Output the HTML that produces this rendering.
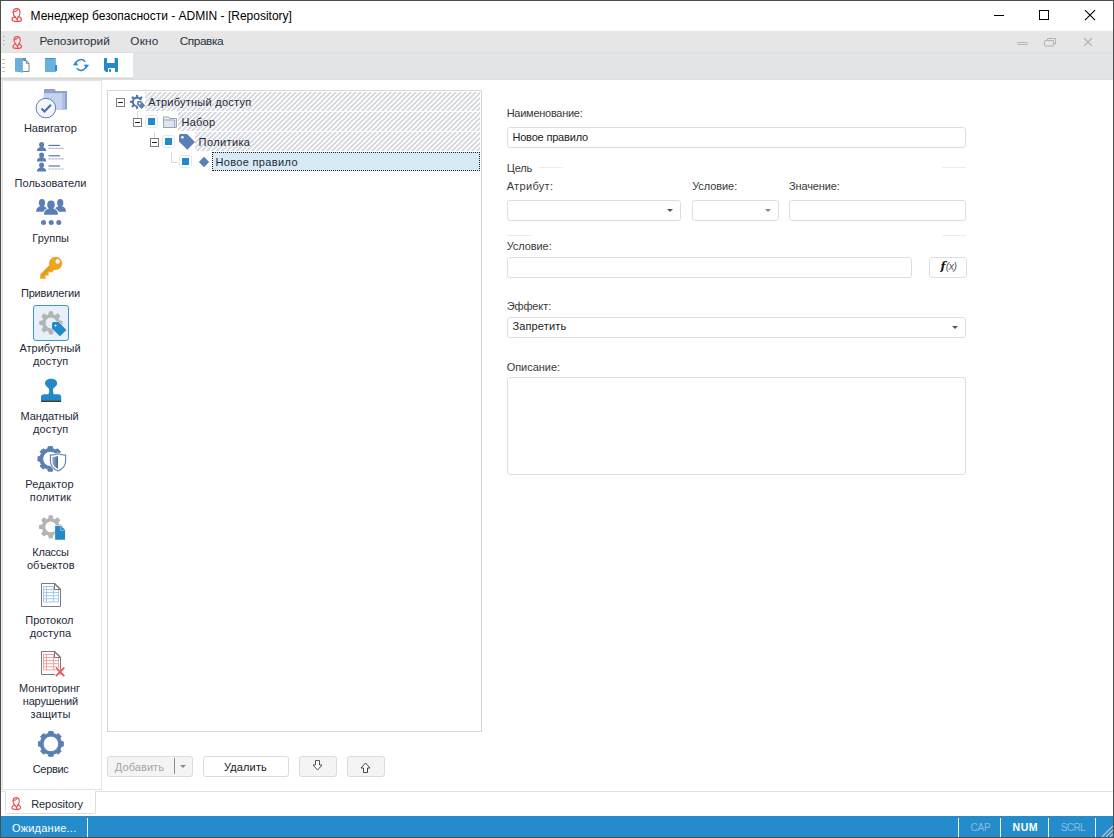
<!DOCTYPE html>
<html lang="ru">
<head>
<meta charset="utf-8">
<title>Менеджер безопасности - ADMIN - [Repository]</title>
<style>
*{box-sizing:border-box;margin:0;padding:0}
html,body{width:1114px;height:838px;overflow:hidden;background:#fff}
body{font-family:"Liberation Sans",sans-serif;font-size:12px;color:#222;position:relative}
.abs{position:absolute}
.t{position:absolute;white-space:pre;line-height:1}
svg{position:absolute;overflow:visible}
#win{position:absolute;left:0;top:0;width:1114px;height:838px;border:1px solid #4f4f4f;overflow:hidden;background:#fff}
#in{position:absolute;left:-1px;top:-1px;width:1114px;height:838px}
#titlebar{left:1px;top:1px;width:1112px;height:30px;background:#fff}
#menubar{left:1px;top:31px;width:1112px;height:22px;background:#e6e6e6;border-bottom:1px solid #e0e0e0}
#toolbar{left:1px;top:53px;width:1112px;height:26px;background:#e1e5e8}
#toolwhite{left:1px;top:53px;width:132px;height:24px;background:#fff}
#tb1{left:1px;top:77px;width:132px;height:1px;background:#ececec}
#tb2{left:1px;top:78px;width:132px;height:1px;background:#d2d4d5}
#tb3{left:1px;top:79px;width:1112px;height:1px;background:#e0e1dc}
#sidebar{left:2px;top:80px;width:100px;height:710px;border:1px solid #e1e5ea;background:#fff}
.sl{color:#1e2a3a}
#selbox{left:33px;top:305px;width:36px;height:36px;border:1px solid #3a96d2;border-radius:3px;background:#e8f1fa}
#tree{left:107px;top:90px;width:375px;height:642px;border:1px solid #d3d7dc;background:#fff}
.hatch{position:absolute;height:19px;background-color:#fff;background-image:repeating-linear-gradient(135deg,#d9dce1 0,#d9dce1 1.5px,#fff 1.5px,#fff 3.5355px)}
.tt{color:#1e2a3a}
.exp{position:absolute;width:9px;height:9px;border:1px solid #7c7c7c;background:#fff}
.exp:after{content:"";position:absolute;left:1px;top:3px;width:5px;height:1px;background:#222}
.chk{position:absolute;width:13px;height:13px;border:1px solid #e6e8eb;border-radius:3px;background:#fff}
.chk:after{content:"";position:absolute;left:2px;top:2px;width:7px;height:7px;background:#2389c9}
.ln{position:absolute;background:#dadada}
#sel{left:212px;top:152px;width:268px;height:19px;background:#d9eaf7;border:1px dotted #222}
.lbl{color:#3a3a3a}
.inp{position:absolute;height:21px;border:1px solid #dedede;border-radius:3px;background:#fff}
.arr{position:absolute;width:0;height:0;border-left:3px solid transparent;border-right:3px solid transparent;border-top:3px solid #555}
.sepl{position:absolute;height:1px;background:#ececec}
.btn{position:absolute;height:21px;border:1px solid #dcdcdc;border-radius:3px;background:#fff}
.btn.g{background:#f4f4f4}
#tabstrip{left:1px;top:791px;width:1112px;height:25px;background:#fff;border-top:1px solid #e2e2dc}
#tab{left:5px;top:791px;width:91px;height:23px;background:#fff;border:1px solid #dedede;border-top:none;border-radius:0 0 2px 2px}
#status{left:1px;top:816px;width:1112px;height:21px;background:#258ccc}
.ssep{position:absolute;top:818px;width:1px;height:19px;background:#f0f5fa}
</style>
</head>
<body>
<div id="win"><div id="in">

<!-- TITLE -->
<div id="titlebar" class="abs"></div>
<svg style="left:11px;top:8px" width="12" height="14" viewBox="0 0 12 14"><g fill="none" stroke="#f04a50" stroke-width="1.15" stroke-linecap="round" stroke-linejoin="round">
<path d="M2.200 4.600C2.200 1.800 3.800 .600 5.600 .600S9 1.800 9 4.600C9 6.400 8.300 7.800 7.400 8.600"/>
<path d="M2.200 4.600C2.300 6.600 3 8 4.200 8.900"/>
<path d="M2.600 3.600C4 3.600 5.600 3 6.600 1.800"/>
<path d="M4.200 8.900C2.400 9.200 1 10 1 11.600C1 13 2.600 13.400 4.600 13.400S7 13.400 7.600 13.400C9.600 13.400 10.400 12.400 10.400 11.400C10.400 10 9.200 9 7.400 8.600"/>
<path d="M4.200 8.900L6 11.400L7.400 8.600M6 11.400L6.600 13.300"/>
</g></svg>
<div class="t" style="left:30.5px;top:10.24px;font-size:12px;color:#000;">Менеджер безопасности - ADMIN - [Repository]</div>
<svg style="left:980px;top:1px" width="133" height="30" viewBox="0 0 133 30">
<path d="M14 14.500h10" stroke="#000" stroke-width="1" fill="none"/>
<rect x="59.500" y="9.500" width="9" height="9" stroke="#000" stroke-width="1" fill="none"/>
<path d="M105 9.200l10 10M115 9.200l-10 10" stroke="#000" stroke-width="1.100" fill="none"/>
</svg>

<!-- MENU -->
<div id="menubar" class="abs"></div>
<div class="abs" style="left:3px;top:36px;width:2px;height:1px;background:#bdbdbd"></div>
<div class="abs" style="left:3px;top:40px;width:2px;height:1px;background:#bdbdbd"></div>
<div class="abs" style="left:3px;top:44px;width:2px;height:1px;background:#bdbdbd"></div>
<svg style="left:12px;top:35.500px" width="11" height="13" viewBox="0 0 12 14"><g fill="none" stroke="#f04a50" stroke-width="1.15" stroke-linecap="round" stroke-linejoin="round">
<path d="M2.200 4.600C2.200 1.800 3.800 .600 5.600 .600S9 1.800 9 4.600C9 6.400 8.300 7.800 7.400 8.600"/>
<path d="M2.200 4.600C2.300 6.600 3 8 4.200 8.900"/>
<path d="M2.600 3.600C4 3.600 5.600 3 6.600 1.800"/>
<path d="M4.200 8.900C2.400 9.200 1 10 1 11.600C1 13 2.600 13.400 4.600 13.400S7 13.400 7.600 13.400C9.600 13.400 10.400 12.400 10.400 11.400C10.400 10 9.200 9 7.400 8.600"/>
<path d="M4.200 8.900L6 11.400L7.400 8.600M6 11.400L6.600 13.300"/>
</g></svg>
<div class="t" style="left:39.5px;top:36.21px;font-size:11.8px;color:#28323f;">Репозиторий</div>
<div class="t" style="left:130.3px;top:36.21px;font-size:11.8px;letter-spacing:0.2px;color:#28323f;">Окно</div>
<div class="t" style="left:179.7px;top:36.21px;font-size:11.8px;letter-spacing:-0.4px;color:#28323f;">Справка</div>
<svg style="left:1010px;top:31px" width="100" height="22" viewBox="0 0 100 22">
<g fill="none" stroke="#b4b4b4" stroke-width="1">
<rect x="7.500" y="11.500" width="10" height="2" rx="1"/>
<path d="M37.500 9v-1.500h8v5.500h-1.500"/><rect x="34.500" y="9.500" width="9" height="5.500" rx=".5"/>
<path d="M74 7l8 8M82 7l-8 8" stroke-width="1.100"/>
</g></svg>

<!-- TOOLBAR -->
<div id="toolbar" class="abs"></div><div id="toolwhite" class="abs"></div>
<div id="tb1" class="abs"></div><div id="tb2" class="abs"></div><div id="tb3" class="abs"></div>
<div class="abs" style="left:2.300px;top:59px;width:3.200px;height:1px;background:#bcbcbc"></div>
<div class="abs" style="left:2.300px;top:63px;width:3.200px;height:1px;background:#bcbcbc"></div>
<div class="abs" style="left:2.300px;top:67px;width:3.200px;height:1px;background:#bcbcbc"></div>
<div class="abs" style="left:2.300px;top:71px;width:3.200px;height:1px;background:#bcbcbc"></div>
<svg style="left:0;top:0" width="140" height="80" viewBox="0 0 140 80">
<!-- open folder with document -->
<path d="M15 58h10.800v3h-3.200v11.600L15 71.200Z" fill="#6ab0dc"/>
<path d="M15 58h10.800v2.600h-1V59H15Z" fill="#2a8ccb"/>
<path d="M23.200 60.500h3l2.800 2.800v8.200h-6" fill="#fff" stroke="#808080" stroke-width="1"/>
<path d="M26.200 60.500v2.800h2.800" fill="none" stroke="#808080" stroke-width="1"/>
<path d="M15 58h7.600v14.600L15 71.200Z" fill="#6ab0dc"/>
<!-- closed folder -->
<path d="M45 58h10.600v7h1.400v6h-1.400v1H45Z" fill="#2a8ccb"/>
<path d="M45 58.800h10v13.200H45Z" fill="#6ab0dc"/>
<!-- refresh -->
<g fill="none" stroke="#2a8ccb" stroke-width="1.500">
<path d="M75.600 65.400a5.400 5.400 0 0 1 9.600-3.700"/>
<path d="M86.400 64.600a5.400 5.400 0 0 1 -9.600 3.700"/>
</g>
<path d="M72.800 65.200h5.600l-2.800-3.600Z" fill="#2a8ccb"/>
<path d="M83.600 64.800h5.600l-2.800 3.600Z" fill="#2a8ccb"/>
<!-- save -->
<path d="M105 58h12a1 1 0 0 1 1 1v12a1 1 0 0 1 -1 1h-11l-2-2V59a1 1 0 0 1 1-1Z" fill="#2389c9"/>
<rect x="107" y="58" width="7.600" height="5" fill="#fff"/>
<rect x="108" y="68" width="7" height="4" fill="#fff"/>
<rect x="109.200" y="69" width="1.800" height="3" fill="#2389c9"/>
</svg>

<!-- SIDEBAR -->
<div class="abs" style="left:1px;top:80px;width:1px;height:711px;background:#ecece8"></div><div id="sidebar" class="abs"></div>
<div id="selbox" class="abs"></div>
<div class="t" style="left:50.35px;top:123.09px;font-size:11px;transform:translateX(-50%);color:#1e2a3a;">Навигатор</div>
<div class="t" style="left:50.5px;top:178.39px;font-size:11px;transform:translateX(-50%);color:#1e2a3a;">Пользователи</div>
<div class="t" style="left:50.7px;top:232.59px;font-size:11px;transform:translateX(-50%);color:#1e2a3a;">Группы</div>
<div class="t" style="left:50.445px;top:288.29px;font-size:11px;transform:translateX(-50%);letter-spacing:-0.21px;color:#1e2a3a;">Привилегии</div>
<div class="t" style="left:50px;top:343.39px;font-size:11px;transform:translateX(-50%);color:#1e2a3a;">Атрибутный</div>
<div class="t" style="left:50.695px;top:356.29px;font-size:11px;transform:translateX(-50%);letter-spacing:0.09px;color:#1e2a3a;">доступ</div>
<div class="t" style="left:49.6px;top:411.29px;font-size:11px;transform:translateX(-50%);letter-spacing:-0.1px;color:#1e2a3a;">Мандатный</div>
<div class="t" style="left:50.695px;top:424.09px;font-size:11px;transform:translateX(-50%);letter-spacing:0.09px;color:#1e2a3a;">доступ</div>
<div class="t" style="left:49.475px;top:479.29px;font-size:11px;transform:translateX(-50%);letter-spacing:0.15px;color:#1e2a3a;">Редактор</div>
<div class="t" style="left:50.525px;top:492.29px;font-size:11px;transform:translateX(-50%);letter-spacing:0.15px;color:#1e2a3a;">политик</div>
<div class="t" style="left:50.535px;top:547.29px;font-size:11px;transform:translateX(-50%);letter-spacing:-0.23px;color:#1e2a3a;">Классы</div>
<div class="t" style="left:50.755px;top:560.09px;font-size:11px;transform:translateX(-50%);letter-spacing:0.11px;color:#1e2a3a;">объектов</div>
<div class="t" style="left:49.4px;top:615.29px;font-size:11px;transform:translateX(-50%);color:#1e2a3a;">Протокол</div>
<div class="t" style="left:50.495px;top:628.09px;font-size:11px;transform:translateX(-50%);letter-spacing:0.09px;color:#1e2a3a;">доступа</div>
<div class="t" style="left:49.6px;top:682.89px;font-size:11px;transform:translateX(-50%);color:#1e2a3a;">Мониторинг</div>
<div class="t" style="left:50.4px;top:695.89px;font-size:11px;transform:translateX(-50%);letter-spacing:-0.2px;color:#1e2a3a;">нарушений</div>
<div class="t" style="left:50.55px;top:708.99px;font-size:11px;transform:translateX(-50%);letter-spacing:0.1px;color:#1e2a3a;">защиты</div>
<div class="t" style="left:50.595px;top:764.09px;font-size:11px;transform:translateX(-50%);letter-spacing:-0.31px;color:#1e2a3a;">Сервис</div>
<svg style="left:0;top:0" width="110" height="800" viewBox="0 0 110 800">
<path d="M44 89h10.500l1.500 2h11v18.600H44Z" fill="#8fa3cf"/><path d="M43.500 93.200h21.500v16.400H43.500Z" fill="#c5d3ee"/><path d="M62 93.200h3v16.400h-3Z" fill="#aebfe3"/><circle cx="45.900" cy="108.100" r="9.800" fill="#f3f6fb" stroke="#5b80b3" stroke-width="1"/><path d="M41.600 108.600l2.800 2.900l6.600-6.800" fill="none" stroke="#4a6fa5" stroke-width="2.100"/>
<ellipse cx="41.60" cy="144.70" rx="2.48" ry="2.70" fill="#5b7fb5"/><path d="M37.00 151.00c0-2.88 1.66-3.24 3.31-4.05v-1.08h2.58v1.08c1.66 0.81 3.31 1.17 3.31 4.05Z" fill="#5b7fb5"/><path d="M48.500 145.4h11.500" stroke="#4a6fa5" stroke-width="1.100"/><path d="M48.500 148.4h15.500" stroke="#b4b9c4" stroke-width="1.200" stroke-dasharray="2.500 .500"/><ellipse cx="41.60" cy="155.10" rx="2.48" ry="2.70" fill="#5b7fb5"/><path d="M37.00 161.40c0-2.88 1.66-3.24 3.31-4.05v-1.08h2.58v1.08c1.66 0.81 3.31 1.17 3.31 4.05Z" fill="#5b7fb5"/><path d="M48.500 155.8h11.500" stroke="#4a6fa5" stroke-width="1.100"/><path d="M48.500 158.8h15.500" stroke="#b4b9c4" stroke-width="1.200" stroke-dasharray="2.500 .500"/><ellipse cx="41.60" cy="165.30" rx="2.48" ry="2.70" fill="#5b7fb5"/><path d="M37.00 171.60c0-2.88 1.66-3.24 3.31-4.05v-1.08h2.58v1.08c1.66 0.81 3.31 1.17 3.31 4.05Z" fill="#5b7fb5"/><path d="M48.500 166.0h11.500" stroke="#4a6fa5" stroke-width="1.100"/><path d="M48.500 169.0h15.500" stroke="#b4b9c4" stroke-width="1.200" stroke-dasharray="2.500 .500"/>
<ellipse cx="41.95" cy="202.84" rx="3.11" ry="3.84" fill="#5b7fb5"/><path d="M36.20 211.80c0-4.10 2.07-4.61 4.14-5.76v-1.54h3.22v1.54c2.07 1.15 4.14 1.66 4.14 5.76Z" fill="#5b7fb5"/><ellipse cx="60.25" cy="202.84" rx="3.11" ry="3.84" fill="#5b7fb5"/><path d="M54.50 211.80c0-4.10 2.07-4.61 4.14-5.76v-1.54h3.22v1.54c2.07 1.15 4.14 1.66 4.14 5.76Z" fill="#5b7fb5"/><ellipse cx="51.00" cy="204.65" rx="4.10" ry="4.35" fill="#fff" stroke="#fff" stroke-width="1.400"/><path d="M43.40 214.80c0-4.64 2.74-5.22 5.47-6.53v-1.74h4.26v1.74c2.74 1.30 5.47 1.89 5.47 6.53Z" fill="#fff" stroke="#fff" stroke-width="1.400"/><ellipse cx="51.00" cy="204.79" rx="3.78" ry="4.29" fill="#5b7fb5"/><path d="M44.00 214.80c0-4.58 2.52-5.15 5.04-6.44v-1.72h3.92v1.72c2.52 1.29 5.04 1.86 5.04 6.44Z" fill="#5b7fb5"/><circle cx="43.5" cy="222.500" r="2.500" fill="#5b7fb5"/><circle cx="51.2" cy="222.500" r="2.500" fill="#5b7fb5"/><circle cx="58.8" cy="222.500" r="2.500" fill="#5b7fb5"/>
<g fill="#f0a321"><circle cx="55.600" cy="263.400" r="6.600"/><path d="M50 264.200L40.200 274.400v4.400h5.400v-3.300h3v-3.200h3.300l4-4Z"/></g><circle cx="57.700" cy="261.500" r="2.200" fill="#fff"/><path d="M42.300 275.200l7.800-7.800" stroke="#9a7a3a" stroke-width=".6"/>
<path d="M59.17 320.21 L62.55 321.05 L62.55 324.75 L59.17 325.59 L58.65 326.85 L60.45 329.84 L57.84 332.45 L54.85 330.65 L53.59 331.17 L52.75 334.55 L49.05 334.55 L48.21 331.17 L46.95 330.65 L43.96 332.45 L41.35 329.84 L43.15 326.85 L42.63 325.59 L39.25 324.75 L39.25 321.05 L42.63 320.21 L43.15 318.95 L41.35 315.96 L43.96 313.35 L46.95 315.15 L48.21 314.63 L49.05 311.25 L52.75 311.25 L53.59 314.63 L54.85 315.15 L57.84 313.35 L60.45 315.96 L58.65 318.95ZM45.50 322.90a5.40 5.40 0 1 0 10.80 0a5.40 5.40 0 1 0 -10.80 0Z" fill="#b4b4b4" fill-rule="evenodd"/><path d="M51.300 323.400Q51.300 321.400 53.300 321.400H58.900L67.400 330L59.900 337.300L51.300 328.700Z" fill="#e8f1fa"/><path d="M52 323.600Q52 322.100 53.500 322.100H58.600L66.400 330L59.900 336.300L52 328.400Z" fill="#2389c9"/><path d="M55.500 324.400l1.200 1.200l-1.200 1.200l-1.200-1.200Z" fill="#fff"/>
<path d="M51.100 378.700c3.600 0 6.100 2.100 6.100 4.700c0 2.400-2.800 3.400-3.800 5.200c-.6 1.400-.5 3.400 .3 5.600h4.400c1.800 0 3.100 1 3.100 2.600v4h-20.200v-4c0-1.600 1.300-2.600 3.100-2.600h4.400c.8-2.200 .9-4.200 .3-5.600c-1-1.800-3.800-2.800-3.800-5.200c0-2.600 2.500-4.700 6.100-4.700Z" fill="#2389c9"/><rect x="41.100" y="400.400" width="20" height="1.600" fill="#3c3c3c"/>
<path d="M60.51 456.45 L62.62 456.79 L62.62 461.01 L60.51 461.35 L59.25 464.39 L60.50 466.12 L57.52 469.10 L55.79 467.85 L52.75 469.11 L52.41 471.22 L48.19 471.22 L47.85 469.11 L44.81 467.85 L43.08 469.10 L40.10 466.12 L41.35 464.39 L40.09 461.35 L37.98 461.01 L37.98 456.79 L40.09 456.45 L41.35 453.41 L40.10 451.68 L43.08 448.70 L44.81 449.95 L47.85 448.69 L48.19 446.58 L52.41 446.58 L52.75 448.69 L55.79 449.95 L57.52 448.70 L60.50 451.68 L59.25 453.41ZM42.70 458.90a7.60 7.60 0 1 0 15.20 0a7.60 7.60 0 1 0 -15.20 0Z" fill="#5b7fb5" fill-rule="evenodd" stroke="#5b7fb5" stroke-width="1" stroke-linejoin="round"/><defs><linearGradient id="shg" x1="0" x2="1"><stop offset="0" stop-color="#9db1d3"/><stop offset="1" stop-color="#46659b"/></linearGradient></defs><path d="M49.300 454C52.500 454 55.300 453.600 58 452.400C60.700 453.600 63.500 454 66.700 454V461C66.700 466.400 62.800 470.200 58 472C53.200 470.200 49.300 466.400 49.300 461Z" fill="#fff"/><path d="M50.400 455.100C53.200 455.100 55.600 454.700 58 453.700C60.400 454.700 62.800 455.100 65.600 455.100V461C65.600 465.800 62.200 469.200 58 470.900C53.800 469.200 50.400 465.800 50.400 461Z" fill="#fff" stroke="#5b7fb5" stroke-width="1.100"/><path d="M52.300 457C54.400 457 56.200 456.700 58 456V468.800C54.800 467.400 52.300 464.800 52.300 461Z" fill="url(#shg)"/>
<path d="M58.97 524.21 L62.35 525.05 L62.35 528.75 L58.97 529.59 L58.45 530.85 L60.25 533.84 L57.64 536.45 L54.65 534.65 L53.39 535.17 L52.55 538.55 L48.85 538.55 L48.01 535.17 L46.75 534.65 L43.76 536.45 L41.15 533.84 L42.95 530.85 L42.43 529.59 L39.05 528.75 L39.05 525.05 L42.43 524.21 L42.95 522.95 L41.15 519.96 L43.76 517.35 L46.75 519.15 L48.01 518.63 L48.85 515.25 L52.55 515.25 L53.39 518.63 L54.65 519.15 L57.64 517.35 L60.25 519.96 L58.45 522.95ZM45.30 526.90a5.40 5.40 0 1 0 10.80 0a5.40 5.40 0 1 0 -10.80 0Z" fill="#b4b4b4" fill-rule="evenodd"/><path d="M54.600 525.400h7l4 4v10.900h-11Z" fill="#fff"/><path d="M55.100 525.900h6l4 4v9.900h-10Z" fill="#2389c9"/><path d="M60.600 526.400v4h4" fill="none" stroke="#9fc3de" stroke-width=".8"/>
<path d="M41.5 583.5h13l6 6v17h-19Z" fill="#fff"/><g fill="none" stroke="#9ecbeb" stroke-width="1"><rect x="43.5" y="586.5" width="15" height="15.4"/><path d="M43.5 589.6h15"/><path d="M43.5 592.6h15"/><path d="M43.5 595.7h15"/><path d="M43.5 598.8h15"/><path d="M46.5 586.5v15.4M53.5 586.5v15.4"/></g><path d="M54.5 583.5v6h6Z" fill="#fff"/><path d="M41.5 583.5h13l6 6v17h-19ZM54.5 583.5v6h6" fill="none" stroke="#7a7a7a" stroke-width="1" stroke-linejoin="miter"/><path d="M54.2 583.2l6.6 6.6" fill="none" stroke="#7a7a7a" stroke-width="1.500"/>
<path d="M41.5 651.5h13l6 6v17h-19Z" fill="#fff"/><g fill="none" stroke="#f2a0a0" stroke-width="1"><rect x="43.5" y="654.5" width="15" height="15.4"/><path d="M43.5 657.6h15"/><path d="M43.5 660.6h15"/><path d="M43.5 663.7h15"/><path d="M43.5 666.8h15"/><path d="M46.5 654.5v15.4M53.5 654.5v15.4"/></g><path d="M54.5 651.5v6h6Z" fill="#fff"/><path d="M41.5 651.5h13l6 6v17h-19ZM54.5 651.5v6h6" fill="none" stroke="#7a7a7a" stroke-width="1" stroke-linejoin="miter"/><path d="M54.2 651.2l6.6 6.6" fill="none" stroke="#7a7a7a" stroke-width="1.500"/><path d="M55.600 667.400l4.500 4.500l-4.500 4.500" stroke="#fff" stroke-width="3.200" fill="none"/><path d="M55.900 667.700l8.400 8.400M64.300 667.700l-8.400 8.400" stroke="#ee5054" stroke-width="1.700"/>
<path d="M61.30 741.40 L63.32 741.77 L63.32 746.03 L61.30 746.40 L60.02 749.49 L61.19 751.18 L58.18 754.19 L56.49 753.02 L53.40 754.30 L53.03 756.32 L48.77 756.32 L48.40 754.30 L45.31 753.02 L43.62 754.19 L40.61 751.18 L41.78 749.49 L40.50 746.40 L38.48 746.03 L38.48 741.77 L40.50 741.40 L41.78 738.31 L40.61 736.62 L43.62 733.61 L45.31 734.78 L48.40 733.50 L48.77 731.48 L53.03 731.48 L53.40 733.50 L56.49 734.78 L58.18 733.61 L61.19 736.62 L60.02 738.31ZM43.10 743.90a7.80 7.80 0 1 0 15.60 0a7.80 7.80 0 1 0 -15.60 0Z" fill="#5b7fb5" fill-rule="evenodd" stroke="#5b7fb5" stroke-width="1" stroke-linejoin="round"/>
</svg>

<!-- TREE -->
<div id="tree" class="abs"></div>
<div class="abs" style="left:145px;top:92px;width:335px;height:19px;overflow:hidden"><div class="hatch" style="left:0px;top:0;width:335px"></div></div>
<div class="abs" style="left:178px;top:112px;width:302px;height:19px;overflow:hidden"><div class="hatch" style="left:-3px;top:0;width:305px"></div></div>
<div class="abs" style="left:195px;top:132px;width:285px;height:19px;overflow:hidden"><div class="hatch" style="left:0px;top:0;width:285px"></div></div>
<div id="sel" class="abs"></div>
<div class="ln" style="left:137px;top:111px;width:1px;height:7px"></div>
<div class="ln" style="left:154px;top:132px;width:1px;height:6px"></div>
<div class="ln" style="left:171px;top:152px;width:1px;height:11px"></div>
<div class="ln" style="left:171px;top:162px;width:6px;height:1px"></div>
<div class="exp" style="left:116px;top:98px"></div>
<div class="exp" style="left:133px;top:118px"></div>
<div class="exp" style="left:150px;top:138px"></div>
<div class="chk" style="left:145px;top:115px"></div>
<div class="chk" style="left:162px;top:135px"></div>
<div class="chk" style="left:179px;top:155px"></div>
<div class="t" style="left:148.3px;top:97.09px;font-size:11px;letter-spacing:0.25px;color:#1e2a3a;">Атрибутный доступ</div>
<div class="t" style="left:181.5px;top:116.99px;font-size:11px;letter-spacing:0.25px;color:#1e2a3a;">Набор</div>
<div class="t" style="left:198.6px;top:137.09px;font-size:11px;letter-spacing:0.38px;color:#1e2a3a;">Политика</div>
<div class="t" style="left:215.4px;top:157.19px;font-size:11px;letter-spacing:0.35px;color:#1e2a3a;">Новое правило</div>
<svg style="left:0;top:0" width="500" height="180" viewBox="0 0 500 180">
<circle cx="137.0" cy="101.9" r="4.100" fill="none" stroke="#4f78ad" stroke-width="2"/><path d="M137.00 106.70L137.00 108.00M133.61 105.29L132.69 106.21M132.20 101.90L130.90 101.90M133.61 98.51L132.69 97.59M137.00 97.10L137.00 95.80M140.39 98.51L141.31 97.59" stroke="#4f78ad" stroke-width="2.300" stroke-linecap="round" fill="none"/><path d="M136.200 102.400Q136.200 100.300 138.300 100.300H141.300L146.300 105.400L141.500 110.200L136.200 104.900Z" fill="#fff"/><path d="M137 102.400Q137 101.100 138.300 101.100H141L145.200 105.400L141.500 109.100L137 104.600Z" fill="#5b80b3"/><circle cx="139.600" cy="103.600" r="1" fill="#fff"/>
<path d="M163.500 117h5.200l1 1.500h6.800v9h-13Z" fill="#eef1f6" stroke="#97a3b8" stroke-width="1"/><path d="M163.500 120h11.200v7.500h-11.200Z" fill="#dfe5ef" stroke="#97a3b8" stroke-width="1"/>
<path d="M179 135.400a1.500 1.500 0 0 1 1.500-1.500h6.600l7.900 8l-7.700 7.900l-8.300-8.400Z" fill="#5b7fb5"/><circle cx="182.400" cy="137.300" r="1.300" fill="#fff"/>
<path d="M204 156.800l5.200 5.200l-5.200 5.200l-5.200-5.200Z" fill="#5b7fb5"/>
</svg>

<!-- FORM -->
<div class="t" style="left:506.7px;top:107.79px;font-size:11px;letter-spacing:-0.27px;color:#3a3a3a;">Наименование:</div>
<div class="inp" style="left:507px;top:127px;width:459px"></div>
<div class="t" style="left:512.4px;top:131.79px;font-size:11px;letter-spacing:-0.18px;color:#222;">Новое правило</div>
<div class="t" style="left:506.7px;top:162.89px;font-size:11px;letter-spacing:-0.16px;color:#3a3a3a;">Цель</div>
<div class="sepl" style="left:539px;top:167px;width:24px"></div><div class="sepl" style="left:942px;top:167px;width:24px"></div>
<div class="t" style="left:506.7px;top:180.89px;font-size:11px;letter-spacing:0.33px;color:#3a3a3a;">Атрибут:</div>
<div class="t" style="left:692.2px;top:180.89px;font-size:11px;letter-spacing:-0.08px;color:#3a3a3a;">Условие:</div>
<div class="t" style="left:789px;top:180.89px;font-size:11px;letter-spacing:-0.12px;color:#3a3a3a;">Значение:</div>
<div class="inp" style="left:507px;top:200px;width:174px"></div><div class="arr" style="left:667px;top:209px"></div>
<div class="inp" style="left:692px;top:200px;width:87px"></div><div class="arr" style="left:765px;top:209px;border-top-color:#888"></div>
<div class="inp" style="left:789px;top:200px;width:177px"></div>
<div class="sepl" style="left:507px;top:235px;width:24px"></div><div class="sepl" style="left:942px;top:235px;width:24px"></div>
<div class="t" style="left:506.7px;top:240.89px;font-size:11px;letter-spacing:-0.08px;color:#3a3a3a;">Условие:</div>
<div class="inp" style="left:507px;top:257px;width:405px"></div>
<div class="inp" style="left:929px;top:257px;width:38px"></div>
<div class="t" style="left:940.600px;top:260.500px;font-family:'DejaVu Serif','Liberation Serif',serif;font-style:italic;font-weight:bold;font-size:11.500px;color:#111">f</div><div class="t" style="left:945.800px;top:261.300px;font-style:italic;font-size:10.500px;color:#5a5a5a;letter-spacing:-.5px">(x)</div>
<div class="t" style="left:506.7px;top:300.59px;font-size:11px;letter-spacing:-0.11px;color:#3a3a3a;">Эффект:</div>
<div class="inp" style="left:507px;top:317px;width:459px"></div><div class="arr" style="left:951.500px;top:326px"></div>
<div class="t" style="left:512.4px;top:321.19px;font-size:11px;letter-spacing:0.15px;color:#222;">Запретить</div>
<div class="t" style="left:506.7px;top:361.59px;font-size:11px;letter-spacing:-0.04px;color:#3a3a3a;">Описание:</div>
<div class="inp" style="left:507px;top:377px;width:459px;height:98px"></div>

<!-- BOTTOM -->
<div class="btn g" style="left:107px;top:756px;width:86px"></div>
<div class="t" style="left:114.8px;top:761.99px;font-size:11px;letter-spacing:0.08px;color:#a4a4a4;">Добавить</div>
<div class="abs" style="left:174px;top:758px;width:1px;height:16px;background:#8c8c8c"></div><div class="arr" style="left:180px;top:765px;border-top-color:#8a8a8a"></div>
<div class="btn" style="left:203px;top:756px;width:86px"></div>
<div class="t" style="left:223.9px;top:761.99px;font-size:11px;letter-spacing:0.16px;color:#1a1a1a;">Удалить</div>
<div class="btn g" style="left:299px;top:756px;width:38px"></div><div class="btn g" style="left:347px;top:756px;width:38px"></div>
<svg style="left:0;top:0" width="400" height="790" viewBox="0 0 400 790">
<path d="M315.500 760.500h4v4.500h2.500l-4.500 5l-4.500-5h2.500Z" fill="#fff" stroke="#555" stroke-width="1" stroke-linejoin="round"/>
<path d="M363.500 772.500h4v-4.500h2.500l-4.500-5l-4.500 5h2.500Z" fill="#fff" stroke="#444" stroke-width="1" stroke-linejoin="round"/>
</svg>
<div id="tabstrip" class="abs"></div><div id="tab" class="abs"></div>
<svg style="left:11px;top:796.500px" width="11" height="13" viewBox="0 0 12 14"><g fill="none" stroke="#f04a50" stroke-width="1.15" stroke-linecap="round" stroke-linejoin="round">
<path d="M2.200 4.600C2.200 1.800 3.800 .600 5.600 .600S9 1.800 9 4.600C9 6.400 8.300 7.800 7.400 8.600"/>
<path d="M2.200 4.600C2.300 6.600 3 8 4.200 8.900"/>
<path d="M2.600 3.600C4 3.600 5.600 3 6.600 1.800"/>
<path d="M4.200 8.900C2.400 9.200 1 10 1 11.600C1 13 2.600 13.400 4.600 13.400S7 13.400 7.600 13.400C9.600 13.400 10.400 12.400 10.400 11.400C10.400 10 9.200 9 7.400 8.600"/>
<path d="M4.200 8.900L6 11.400L7.400 8.600M6 11.400L6.600 13.300"/>
</g></svg>
<div class="t" style="left:31.2px;top:798.79px;font-size:11px;letter-spacing:-0.08px;color:#1e2a3a;">Repository</div>
<div id="status" class="abs"></div>
<div class="t" style="left:11.9px;top:822.79px;font-size:11px;letter-spacing:0.22px;color:#fff;">Ожидание...</div>
<div class="ssep" style="left:87px"></div><div class="ssep" style="left:958px"></div><div class="ssep" style="left:1000px"></div><div class="ssep" style="left:1048px"></div><div class="ssep" style="left:1095px"></div>
<div class="t" style="left:970.6px;top:822.83px;font-size:10px;letter-spacing:-0.25px;color:#86bde2;">CAP</div>
<div class="t" style="left:1012.6px;top:822.41px;font-size:10.5px;letter-spacing:0.55px;color:#fff;font-weight:bold;">NUM</div>
<div class="t" style="left:1060.7px;top:822.83px;font-size:10px;letter-spacing:-0.6px;color:#86bde2;">SCRL</div>
<svg style="left:1098px;top:822px" width="15" height="15" viewBox="0 0 15 15">
<path d="M4 15L15 4M8 15L15 8M12 15L15 12" stroke="#c6c8c6" stroke-width="1.100" fill="none"/></svg>

</div></div>
</body>
</html>
